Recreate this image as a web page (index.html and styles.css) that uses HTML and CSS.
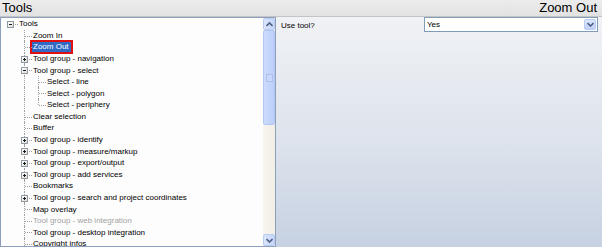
FILE: index.html
```html
<!DOCTYPE html>
<html>
<head>
<meta charset="utf-8">
<link rel="stylesheet" href="styles.css">
</head>
<body>
<div class="app">
  <div class="header">
    <span class="title">Tools</span>
    <span class="title">Zoom Out</span>
  </div>
  <div class="main">
    <div class="treebox">
      <div class="tree">
        <div class="row"><span class="cell h"><span class="box minus"></span></span><span class="label">Tools</span></div>
        <div class="row"><span class="cell"></span><span class="cell t"></span><span class="label">Zoom In</span></div>
        <div class="row"><span class="cell"></span><span class="cell t"></span><span class="label selected">Zoom Out</span></div>
        <div class="row"><span class="cell"></span><span class="cell t"><span class="box plus"></span></span><span class="label">Tool group - navigation</span></div>
        <div class="row"><span class="cell"></span><span class="cell t"><span class="box minus"></span></span><span class="label">Tool group - select</span></div>
        <div class="row"><span class="cell"></span><span class="cell v"></span><span class="cell t"></span><span class="label">Select - line</span></div>
        <div class="row"><span class="cell"></span><span class="cell v"></span><span class="cell t"></span><span class="label">Select - polygon</span></div>
        <div class="row"><span class="cell"></span><span class="cell v"></span><span class="cell l"></span><span class="label">Select - periphery</span></div>
        <div class="row"><span class="cell"></span><span class="cell t"></span><span class="label">Clear selection</span></div>
        <div class="row"><span class="cell"></span><span class="cell t"></span><span class="label">Buffer</span></div>
        <div class="row"><span class="cell"></span><span class="cell t"><span class="box plus"></span></span><span class="label">Tool group - identify</span></div>
        <div class="row"><span class="cell"></span><span class="cell t"><span class="box plus"></span></span><span class="label">Tool group - measure/markup</span></div>
        <div class="row"><span class="cell"></span><span class="cell t"><span class="box plus"></span></span><span class="label">Tool group - export/output</span></div>
        <div class="row"><span class="cell"></span><span class="cell t"><span class="box plus"></span></span><span class="label">Tool group - add services</span></div>
        <div class="row"><span class="cell"></span><span class="cell t"></span><span class="label">Bookmarks</span></div>
        <div class="row"><span class="cell"></span><span class="cell t"><span class="box plus"></span></span><span class="label">Tool group - search and project coordinates</span></div>
        <div class="row"><span class="cell"></span><span class="cell t"></span><span class="label">Map overlay</span></div>
        <div class="row"><span class="cell"></span><span class="cell t"></span><span class="label disabled">Tool group - web integration</span></div>
        <div class="row"><span class="cell"></span><span class="cell t"></span><span class="label">Tool group - desktop integration</span></div>
        <div class="row"><span class="cell"></span><span class="cell t"></span><span class="label">Copyright infos</span></div>
      </div>
      <div class="scrollbar">
        <div class="sbtn"><svg width="7" height="5" viewBox="0 0 7 5"><path d="M0.5 4 L3.5 1 L6.5 4" fill="none" stroke="#4d6185" stroke-width="1.6"/></svg></div>
        <div class="thumb"><span class="grip"></span></div>
        <div class="track"></div>
        <div class="sbtn"><svg width="7" height="5" viewBox="0 0 7 5"><path d="M0.5 1 L3.5 4 L6.5 1" fill="none" stroke="#4d6185" stroke-width="1.6"/></svg></div>
      </div>
    </div>
    <div class="props">
      <span class="plabel">Use tool?</span>
      <div class="select">
        <span class="value">Yes</span>
        <span class="dbtn"><svg width="7" height="5" viewBox="0 0 7 5"><path d="M0.5 1 L3.5 4 L6.5 1" fill="none" stroke="#4d6185" stroke-width="1.6"/></svg></span>
      </div>
    </div>
  </div>
</div>
</body>
</html>
```

FILE: styles.css
```css
html, body {
  margin: 0;
  padding: 0;
}
body {
  width: 602px;
  height: 247px;
  overflow: hidden;
  font-family: "Liberation Sans", Arial, sans-serif;
  background: #ffffff;
}
.app {
  width: 602px;
  height: 247px;
  display: flex;
  flex-direction: column;
}
.header {
  height: 16px;
  display: flex;
  justify-content: space-between;
  align-items: center;
  padding: 0 5px 0 2px;
  background: linear-gradient(to bottom, #ececec, #e2e2e2);
  border-bottom: 1px solid #c4c4c4;
}
.title {
  font-size: 13px;
  color: #000;
  line-height: 16px;
}
.main {
  flex: 1;
  display: flex;
  background: linear-gradient(to bottom, #f0f2f5 0%, #dde3ec 55%, #c6d1e2 100%);
}
.treebox {
  width: 274px;
  height: 228px;
  border: 1px solid #8ca0bd;
  background: #fdfdfd;
  display: flex;
}
.tree {
  flex: 1;
  padding: 0 0 0 2px;
  overflow: hidden;
}
.row {
  height: 11.58px;
  display: flex;
  align-items: stretch;
  font-size: 8px;
  white-space: nowrap;
}
.cell {
  width: 14px;
  flex: none;
  position: relative;
}
.cell.v::before,
.cell.t::before {
  content: "";
  position: absolute;
  left: 7px;
  top: 0;
  bottom: 0;
  border-left: 1px dotted #a0a0a0;
}
.cell.l::before {
  content: "";
  position: absolute;
  left: 7px;
  top: 0;
  height: 6px;
  border-left: 1px dotted #a0a0a0;
}
.cell.t::after,
.cell.l::after,
.cell.h::after {
  content: "";
  position: absolute;
  left: 8px;
  right: -1px;
  top: 6px;
  border-top: 1px dotted #a0a0a0;
}
.box {
  position: absolute;
  left: 4px;
  top: 3px;
  width: 5px;
  height: 5px;
  border: 1px solid #8f9aa6;
  background: linear-gradient(135deg, #ffffff, #dcdcd4);
  z-index: 1;
}
.box::before {
  content: "";
  position: absolute;
  left: 1px;
  top: 2px;
  width: 3px;
  height: 1px;
  background: #1a1a1a;
}
.box.plus::after {
  content: "";
  position: absolute;
  left: 2px;
  top: 1px;
  width: 1px;
  height: 3px;
  background: #1a1a1a;
}
.label {
  margin-left: 1px;
  padding: 0 1px;
  line-height: 11px;
  height: 11px;
  align-self: center;
  color: #000;
}
.label.disabled {
  color: #a3a3a3;
}
.label.selected {
  background: #316ac5;
  color: #fff;
  height: 10px;
  line-height: 10px;
  padding: 0 2px 0 1px;
  outline: 2px solid #e01010;
}
.scrollbar {
  width: 12px;
  display: flex;
  flex-direction: column;
  background: #f5f3ea;
}
.sbtn {
  height: 12px;
  box-sizing: border-box;
  border: 1px solid #b9cbf3;
  border-radius: 2px;
  background: linear-gradient(to right, #dae5fb, #c5d5fa);
  display: flex;
  align-items: center;
  justify-content: center;
}
.thumb {
  height: 95px;
  box-sizing: border-box;
  border: 1px solid #b4c7f4;
  border-radius: 2px;
  background: linear-gradient(to right, #cddbfc, #bccffa);
  display: flex;
  align-items: center;
  justify-content: center;
}
.grip {
  width: 5px;
  height: 6px;
  border: 1px solid #aec1ee;
  background: #c8d7fb;
}
.track {
  flex: 1;
  background: linear-gradient(to right, #f7f5ee, #f1efe4);
}
.props {
  flex: 1;
  display: flex;
  align-items: flex-start;
  padding: 0 4px 0 5px;
}
.plabel {
  font-size: 8px;
  color: #000;
  margin-top: 4px;
  line-height: 10px;
}
.select {
  margin-left: auto;
  width: 174px;
  height: 15px;
  box-sizing: border-box;
  border: 1px solid #7f9db9;
  background: #fff;
  display: flex;
  align-items: center;
  justify-content: space-between;
  padding: 0 1px 0 2px;
}
.value {
  font-size: 8px;
  color: #000;
}
.dbtn {
  width: 12px;
  height: 11px;
  box-sizing: border-box;
  border: 1px solid #b9cbf3;
  border-radius: 2px;
  background: linear-gradient(to bottom, #dbe6fc, #bfd1f8);
  display: flex;
  align-items: center;
  justify-content: center;
}
```
